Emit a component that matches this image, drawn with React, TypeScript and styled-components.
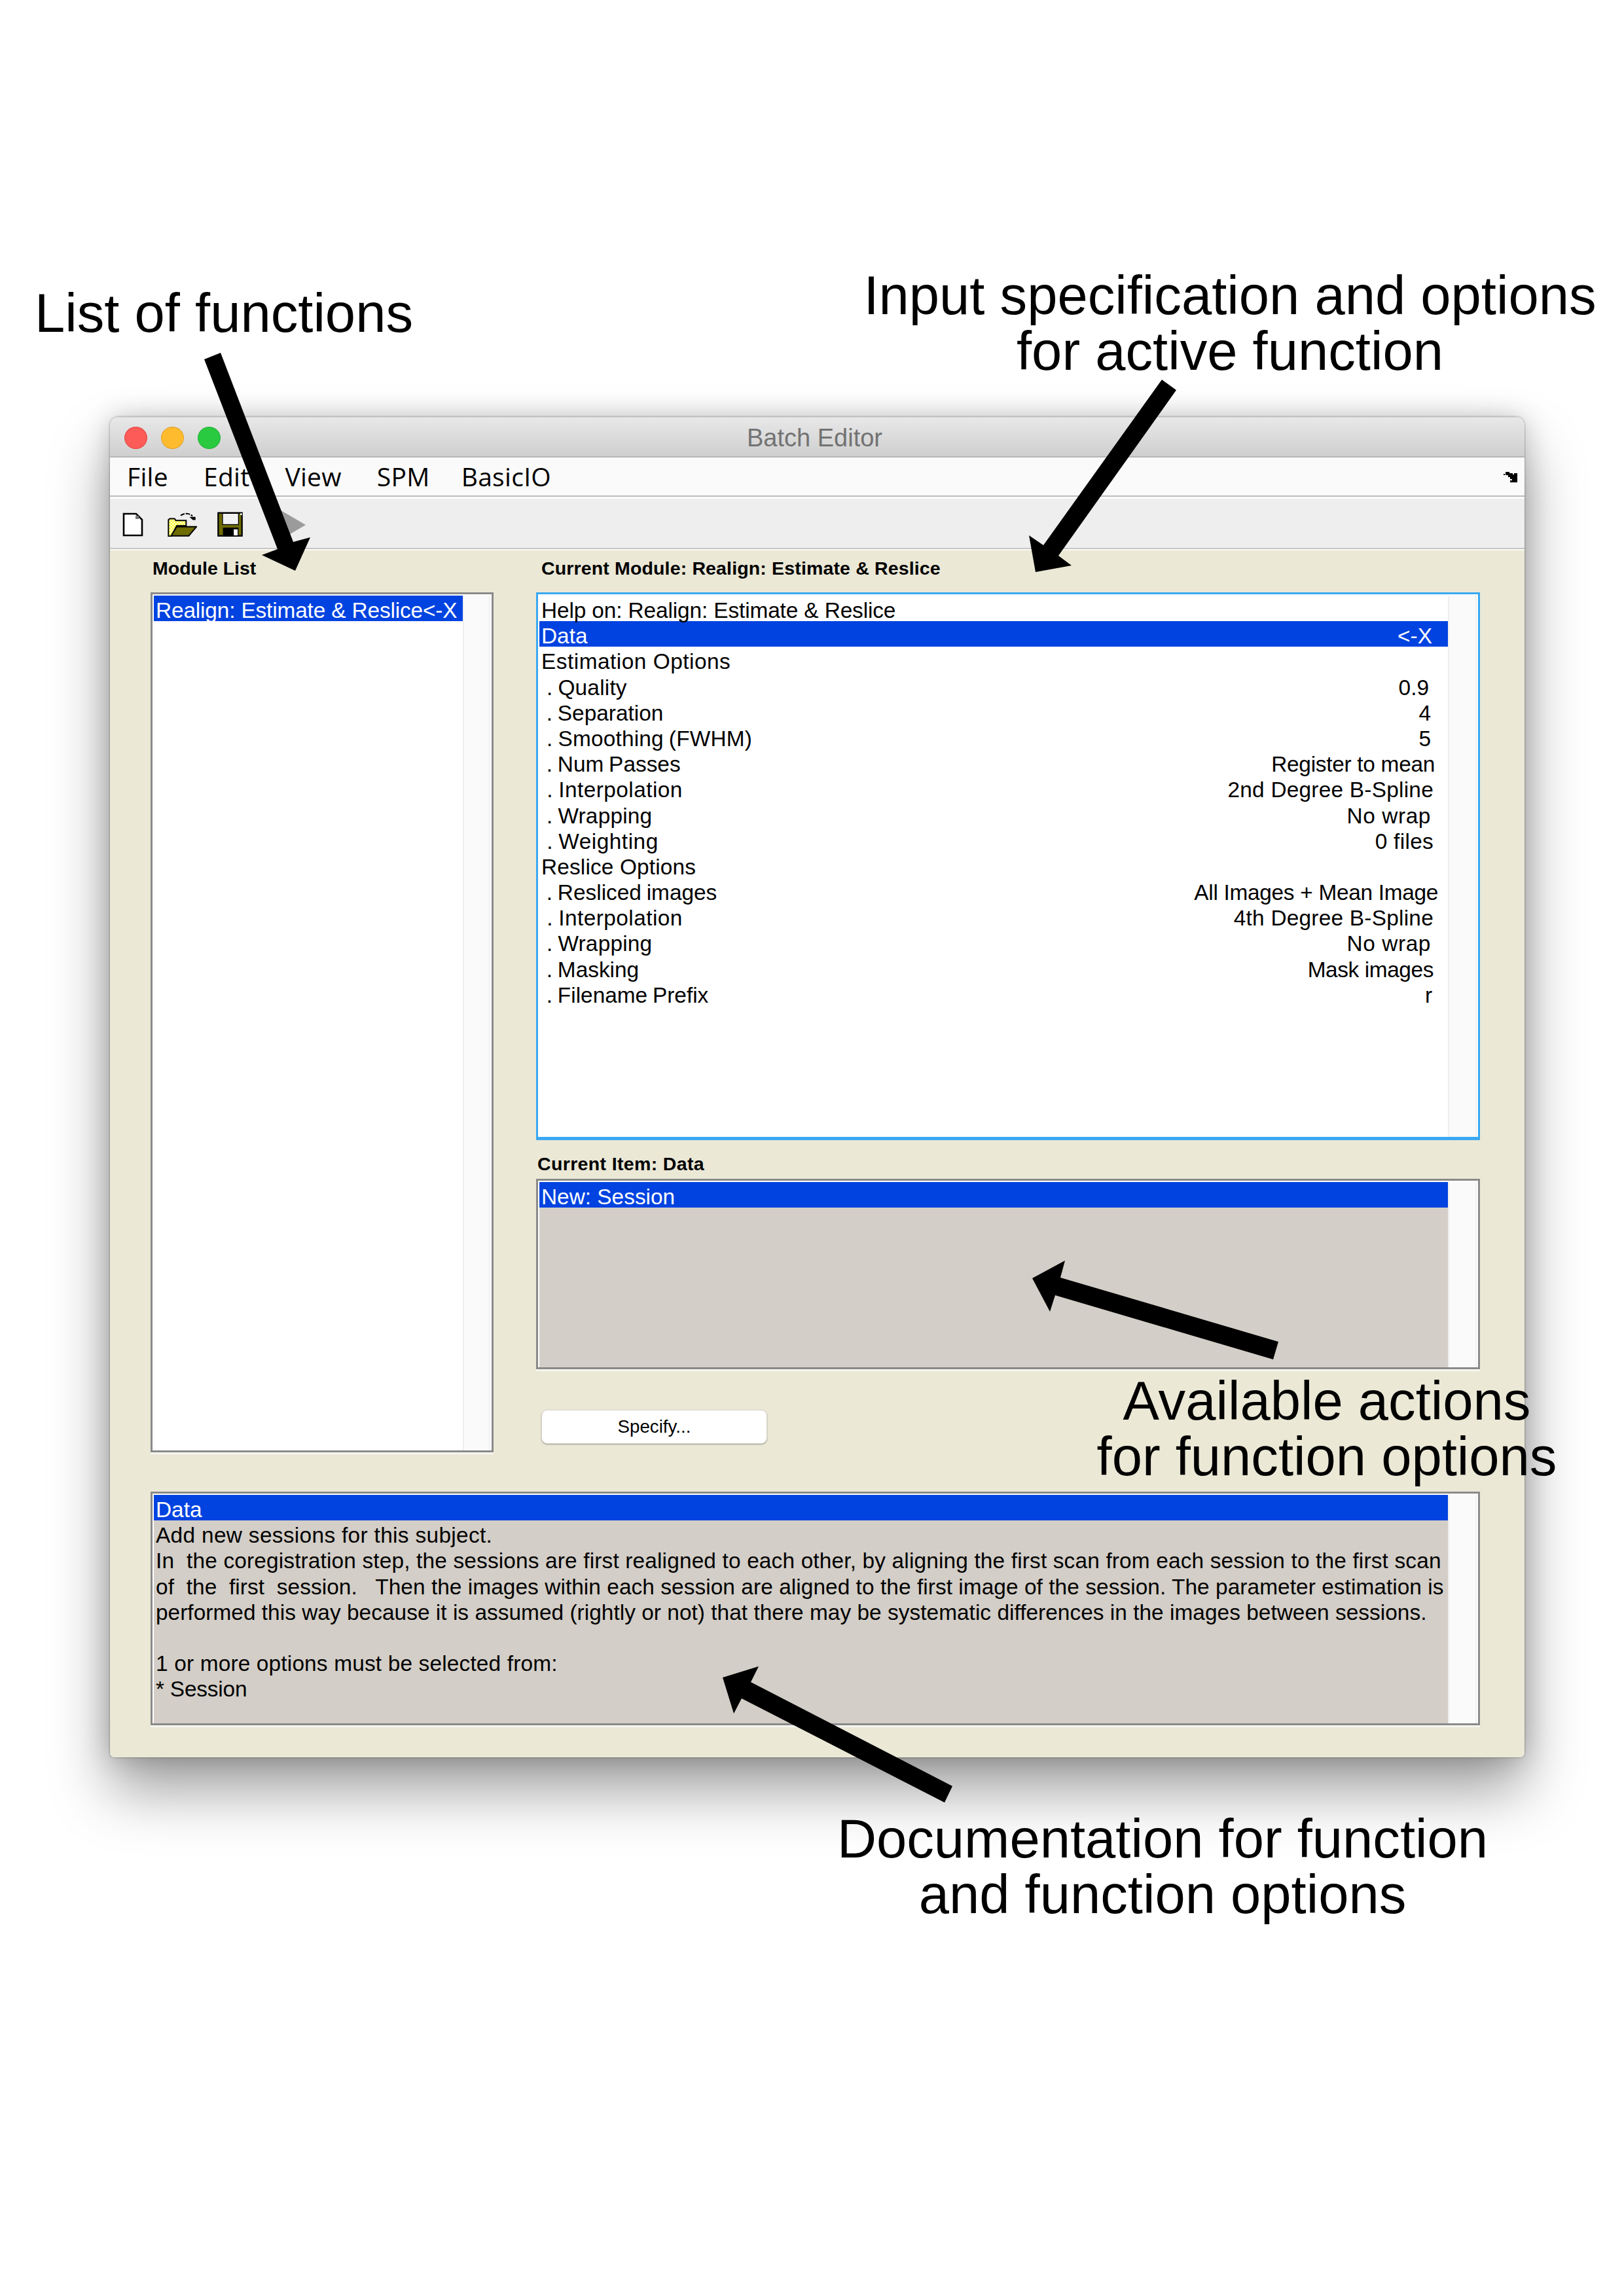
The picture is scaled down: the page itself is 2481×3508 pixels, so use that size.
import React from 'react';
import styled, { createGlobalStyle } from 'styled-components';

const GlobalStyle = createGlobalStyle`
  html, body {
    margin: 0;
    padding: 0;
    background: #ffffff;
  }
`;

const Page = styled.div`
  position: relative;
  box-sizing: border-box;
  width: 2481px;
  height: 3508px;
  padding: 637px 0 0 168px;
  overflow: hidden;
  background: #ffffff;
  font-family: 'Liberation Sans', Arial, sans-serif;
  color: #000000;
`;

const Window = styled.div`
  display: flex;
  flex-direction: column;
  box-sizing: border-box;
  width: 2161px;
  height: 2048px;
  border-radius: 13px 13px 7px 7px;
  overflow: hidden;
`;

const WindowShadow = styled.div`
  width: 2161px;
  height: 2048px;
  border-radius: 13px 13px 7px 7px;
  box-shadow: 0 50px 90px rgba(0, 0, 0, 0.38), 0 0 40px rgba(0, 0, 0, 0.2), 0 0 3px rgba(0, 0, 0, 0.45);
`;

const TitleBar = styled.div`
  display: flex;
  align-items: center;
  position: relative;
  box-sizing: border-box;
  height: 62px;
  padding: 3px 0 0 22px;
  gap: 21px;
  background: linear-gradient(#e8e8e8, #cfcfcf);
  border-top: 1px solid #d4d4d4;
  border-bottom: 2px solid #b6b6b6;
`;

const TrafficLight = styled.span<{ $color: string; $edge: string }>`
  display: block;
  box-sizing: border-box;
  width: 35px;
  height: 34px;
  border-radius: 50%;
  background: ${(p) => p.$color};
  border: 1px solid ${(p) => p.$edge};
`;

const WindowTitle = styled.div`
  position: absolute;
  left: 0;
  right: 0;
  top: 0;
  line-height: 63px;
  text-align: center;
  font-size: 38px;
  color: #737373;
  padding-right: 8px;
`;

const MenuBar = styled.div`
  display: flex;
  align-items: center;
  position: relative;
  box-sizing: border-box;
  height: 60px;
  padding-left: 26px;
  gap: 54px;
  background: #fafafa;
  border-bottom: 2px solid #bcbcbc;
  font-family: 'Open Sans', sans-serif;
  font-size: 39px;
  letter-spacing: 0.3px;
`;

const MenuItem = styled.span<{ $pull?: number }>`
  margin-left: ${(p) => -(p.$pull ?? 0)}px;
  line-height: 58px;
`;

const MenuCorner = styled.svg`
  position: absolute;
  right: 11px;
  top: 22px;
  width: 21px;
  height: 16px;
`;

const ToolBar = styled.div`
  display: flex;
  align-items: center;
  box-sizing: border-box;
  height: 80px;
  padding: 4px 0 0 19px;
  background: #eeeeee;
  border-top: 3px solid #fbfbfb;
  border-bottom: 2px solid #c6c6c6;
`;

const ToolIcon = styled.svg<{ $gap: number }>`
  display: block;
  flex: none;
  margin-right: ${(p) => p.$gap}px;
`;

const Body = styled.div`
  flex: 1;
  display: flex;
  flex-direction: column;
  box-sizing: border-box;
  padding: 9px 0 0 62px;
  background: #ebe8d6;
  border-top: 2px solid #fbfbf5;
`;

const TopRow = styled.div`
  display: flex;
  gap: 65px;
`;

const Column = styled.div<{ $width: number }>`
  display: flex;
  flex-direction: column;
  width: ${(p) => p.$width}px;
`;

const PanelLabel = styled.div<{ $indent: number; $top: number; $bottom: number; $track?: number }>`
  height: 36px;
  margin: ${(p) => p.$top}px 0 ${(p) => p.$bottom}px ${(p) => p.$indent}px;
  line-height: 36px;
  font-size: 28.5px;
  font-weight: 700;
  letter-spacing: ${(p) => p.$track ?? 0}px;
`;

const ListBox = styled.div<{ $height: number; $focused?: boolean; $top?: number }>`
  display: flex;
  box-sizing: border-box;
  height: ${(p) => p.$height}px;
  margin-top: ${(p) => p.$top ?? 0}px;
  padding: 2px 2px 0;
  background: #ffffff;
  border: 3px solid ${(p) => (p.$focused ? '#3aa8f2' : '#8a8a8a')};
  border-bottom-width: ${(p) => (p.$focused ? 5 : 3)}px;
  box-shadow: ${(p) => (p.$focused ? 'none' : '0 3px 0 #f6f6f0')};
`;

const ListRows = styled.div<{ $tone: string }>`
  flex: 1;
  min-width: 0;
  background: ${(p) => p.$tone};
`;

const Scrollbar = styled.div<{ $width: number }>`
  flex: none;
  box-sizing: border-box;
  width: ${(p) => p.$width}px;
  background: #fafafa;
  border-left: 2px solid #eeeeee;
  border-right: 2px solid #f0f0f0;
`;

const Row = styled.div<{ $selected?: boolean; $track?: number }>`
  display: flex;
  justify-content: space-between;
  box-sizing: border-box;
  height: 39.2px;
  padding: 3px 0 0 3px;
  line-height: 39.2px;
  font-size: 33.4px;
  white-space: pre;
  letter-spacing: ${(p) => p.$track ?? 0}px;
  background: ${(p) => (p.$selected ? '#0043e0' : 'transparent')};
  color: ${(p) => (p.$selected ? '#ffffff' : '#000000')};
`;

const RowLabel = styled.span<{ $tight: boolean; $track: number }>`
  letter-spacing: ${(p) => p.$track}px;
  word-spacing: ${(p) => (p.$tight ? -1.5 : 0)}px;
`;

const RowValue = styled.span<{ $inset: number; $track: number }>`
  padding-right: ${(p) => p.$inset}px;
  letter-spacing: ${(p) => p.$track}px;
`;

const SpecifyButton = styled.button`
  display: block;
  box-sizing: border-box;
  width: 345px;
  height: 52px;
  margin: 62px 0 0 8px;
  padding: 0;
  background: #ffffff;
  border: 1px solid #d8d6cc;
  border-radius: 9px;
  box-shadow: 0 1px 2px rgba(0, 0, 0, 0.35);
  font-family: 'Liberation Sans', Arial, sans-serif;
  font-size: 27.7px;
  color: #000000;
`;

const DocBox = styled(ListBox)`
  width: 2031px;
`;

const Callout = styled.div<{ $cx: number; $top: number }>`
  position: absolute;
  left: ${(p) => p.$cx - 800}px;
  top: ${(p) => p.$top}px;
  width: 1600px;
  text-align: center;
  font-size: 83.2px;
  line-height: 85px;
  white-space: pre;
`;

const ArrowLayer = styled.svg`
  position: absolute;
  left: 0;
  top: 0;
  width: 2481px;
  height: 3508px;
  pointer-events: none;
`;

type OptionRow = {
  label: string;
  track?: number;
  value?: string;
  valueTrack?: number;
  inset?: number;
  selected?: boolean;
};

const options: OptionRow[] = [
  { label: 'Help on: Realign: Estimate & Reslice', track: -0.12 },
  { label: 'Data', value: '<-X', inset: 24, selected: true },
  { label: 'Estimation Options', track: 0.5 },
  { label: ' . Quality', track: 0.2, value: '0.9', inset: 29 },
  { label: ' . Separation', value: '4', inset: 26 },
  { label: ' . Smoothing (FWHM)', track: 0.2, value: '5', inset: 26 },
  { label: ' . Num Passes', value: 'Register to mean', valueTrack: -0.28, inset: 20 },
  { label: ' . Interpolation', track: 0.45, value: '2nd Degree B-Spline', valueTrack: 0.24, inset: 22 },
  { label: ' . Wrapping', track: 0.2, value: 'No wrap', valueTrack: 0.6, inset: 26 },
  { label: ' . Weighting', track: 0.5, value: '0 files', valueTrack: 0.3, inset: 22 },
  { label: 'Reslice Options', track: 0.15 },
  { label: ' . Resliced images', value: 'All Images + Mean Image', valueTrack: -0.3, inset: 15 },
  { label: ' . Interpolation', track: 0.45, value: '4th Degree B-Spline', valueTrack: 0.24, inset: 22 },
  { label: ' . Wrapping', track: 0.2, value: 'No wrap', valueTrack: 0.6, inset: 26 },
  { label: ' . Masking', value: 'Mask images', valueTrack: -0.4, inset: 22 },
  { label: ' . Filename Prefix', value: 'r', inset: 24 },
];

const docLines: { text: string; track: number }[] = [
  { text: 'Add new sessions for this subject.', track: 0.33 },
  {
    text: 'In  the coregistration step, the sessions are first realigned to each other, by aligning the first scan from each session to the first scan',
    track: 0.16,
  },
  {
    text: 'of  the  first  session.   Then the images within each session are aligned to the first image of the session. The parameter estimation is',
    track: 0.065,
  },
  {
    text: 'performed this way because it is assumed (rightly or not) that there may be systematic differences in the images between sessions.',
    track: 0.035,
  },
  { text: ' ', track: 0 },
  { text: '1 or more options must be selected from:', track: 0.17 },
  { text: '* Session', track: -0.2 },
];

const arrows = [
  '312,549 337,539 448,828 474,821 451,872 400,848 424,839',
  '1775,580 1797,596 1617,849 1637,864 1582,874 1572,818 1594,833',
  '1953,2050 1945,2077 1612,1979 1604,2004 1577,1953 1627,1926 1620,1952',
  '1455,2729 1443,2754 1133,2595 1121,2618 1104,2563 1159,2546 1147,2570',
];

const App: React.FC = () => {
  return (
    <Page>
      <GlobalStyle />
      <WindowShadow>
        <Window>
          <TitleBar>
            <TrafficLight $color="#fc5b57" $edge="#e5453f" />
            <TrafficLight $color="#febb2e" $edge="#e1a028" />
            <TrafficLight $color="#29c940" $edge="#2bb13a" />
            <WindowTitle>Batch Editor</WindowTitle>
          </TitleBar>
          <MenuBar>
            <MenuItem>File</MenuItem>
            <MenuItem>Edit</MenuItem>
            <MenuItem>View</MenuItem>
            <MenuItem>SPM</MenuItem>
            <MenuItem $pull={6}>BasicIO</MenuItem>
            <MenuCorner viewBox="0 0 21 16">
              <path d="M0 3h2v2H0zM3 0h6v2h5v2h2V2h5v14H10v-3h3v-2h-3V8H7V5H3z" fill="#000" />
            </MenuCorner>
          </MenuBar>
          <ToolBar>
            <ToolIcon $gap={37} width="32" height="37" viewBox="0 0 32 37">
              <path d="M2 2H21L30 11V35H2Z" fill="#fff" stroke="#000" strokeWidth="2.6" />
              <rect x="20" y="5" width="5" height="5" fill="#777" />
            </ToolIcon>
            <ToolIcon $gap={31} width="45" height="37" viewBox="0 0 135 110">
              <defs>
                <pattern id="folderCheck" width="14" height="14" patternUnits="userSpaceOnUse">
                  <rect width="14" height="14" fill="#ffff00" />
                  <rect width="7" height="7" fill="#ffffff" />
                  <rect x="7" y="7" width="7" height="7" fill="#ffffff" />
                </pattern>
              </defs>
              <path d="M4 108V33L10 28H32L38 36H85V60H42L18 108Z" fill="url(#folderCheck)" stroke="#000" strokeWidth="6" />
              <path d="M16 107L42 65H132L97 107Z" fill="#6f6c00" stroke="#000" strokeWidth="6" />
              <path d="M60 14Q72 4 88 5Q104 6 114 16" fill="none" stroke="#000" strokeWidth="6" strokeDasharray="20 5" />
              <path d="M100 20H128V34H116Z" fill="#000" />
            </ToolIcon>
            <ToolIcon $gap={55} width="39" height="39" viewBox="0 0 118 116">
              <rect x="4" y="4" width="110" height="106" fill="#6f6c00" stroke="#000" strokeWidth="7" />
              <rect x="24" y="6" width="74" height="52" fill="#f2f2f2" stroke="#000" strokeWidth="4" />
              <rect x="26" y="72" width="72" height="40" fill="#000" />
              <rect x="76" y="80" width="18" height="28" fill="#ffffff" />
              <rect x="106" y="6" width="8" height="8" fill="#ffffff" />
            </ToolIcon>
            <ToolIcon $gap={0} width="41" height="48" viewBox="0 0 41 48">
              <path d="M0 0L41 24L0 48Z" fill="#9b9b9b" />
            </ToolIcon>
          </ToolBar>
          <Body>
            <TopRow>
              <Column $width={524}>
                <PanelLabel $indent={3} $top={0} $bottom={19}>Module List</PanelLabel>
                <ListBox $height={1314}>
                  <ListRows $tone="#ffffff">
                    <Row $selected $track={-0.15}>Realign: Estimate &amp; Reslice&lt;-X</Row>
                  </ListRows>
                  <Scrollbar $width={42} />
                </ListBox>
              </Column>
              <Column $width={1442}>
                <PanelLabel $indent={8} $top={0} $bottom={19} $track={0.15}>Current Module: Realign: Estimate &amp; Reslice</PanelLabel>
                <ListBox $height={837} $focused>
                  <ListRows $tone="#ffffff">
                    {options.map((o, i) => (
                      <Row key={i} $selected={o.selected}>
                        <RowLabel $tight={o.label.startsWith(' ')} $track={o.track ?? 0}>{o.label}</RowLabel>
                        {o.value && <RowValue $inset={o.inset ?? 0} $track={o.valueTrack ?? 0}>{o.value}</RowValue>}
                      </Row>
                    ))}
                  </ListRows>
                  <Scrollbar $width={44} />
                </ListBox>
                <PanelLabel $indent={2} $top={18} $bottom={5} $track={0.35}>Current Item: Data</PanelLabel>
                <ListBox $height={291}>
                  <ListRows $tone="#d3cec7">
                    <Row $selected>New: Session</Row>
                  </ListRows>
                  <Scrollbar $width={44} />
                </ListBox>
                <SpecifyButton>Specify...</SpecifyButton>
              </Column>
            </TopRow>
            <DocBox $height={357} $top={60}>
              <ListRows $tone="#d3cec7">
                <Row $selected>Data</Row>
                {docLines.map((line, i) => (
                  <Row key={i} $track={line.track}>{line.text}</Row>
                ))}
              </ListRows>
              <Scrollbar $width={44} />
            </DocBox>
          </Body>
        </Window>
      </WindowShadow>
      <ArrowLayer viewBox="0 0 2481 3508">
        {arrows.map((points) => (
          <polygon key={points} points={points} fill="#000" />
        ))}
      </ArrowLayer>
      <Callout $cx={342} $top={436}>List of functions</Callout>
      <Callout $cx={1879} $top={409}>{'Input specification and options\nfor active function'}</Callout>
      <Callout $cx={2027} $top={2098}>{'Available actions\nfor function options'}</Callout>
      <Callout $cx={1776} $top={2767}>{'Documentation for function\nand function options'}</Callout>
    </Page>
  );
};

export default App;
